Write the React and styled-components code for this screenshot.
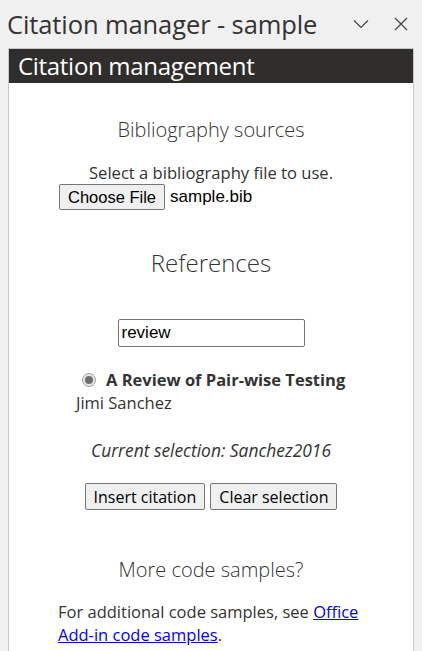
import React from "react";
import styled, { createGlobalStyle } from "styled-components";

const Global = createGlobalStyle`
  html, body { margin: 0; padding: 0; background: #f0f0f0; }
  body { font-family: "Open Sans", "Noto Sans", sans-serif; color: #333; }
  * { box-sizing: border-box; }
`;

const Pane = styled.div`
  width: 422px;
  height: 651px;
  display: flex;
  flex-direction: column;
  overflow: hidden;
  background: #f0f0f0;
`;

const TitleBar = styled.div`
  display: flex;
  align-items: center;
  height: 48px;
  padding: 0 8px 0 7px;
`;

const Title = styled.h1`
  flex: 1;
  margin: 0;
  font-weight: 400;
  font-size: 25.5px;
  color: #333;
  letter-spacing: -0.1px;
`;

const IconBtn = styled.span`
  display: flex;
  width: 26px;
  justify-content: center;
  margin-left: 14px;
  color: #444;
`;

const Panel = styled.div`
  flex: 1;
  margin: 0 8px;
  border: 1px solid #c8c8c8;
  border-bottom: none;
  background: #fff;
  display: flex;
  flex-direction: column;
`;

const PanelHeader = styled.div`
  background: #2f2e2c;
  color: #fff;
  font-size: 24px;
  font-weight: 400;
  height: 34px;
  line-height: 34px;
  padding-left: 9px;
  letter-spacing: -0.3px;
`;

const Section = styled.section`
  text-align: center;
  padding-top: ${(p) => p.$top || 0}px;
`;

const Heading = styled.h2`
  margin: 0;
  font-weight: 300;
  font-size: ${(p) => p.$size || 20}px;
  color: #333;
  line-height: 1.3;
`;

const Text = styled.p`
  margin: ${(p) => p.$mt || 0}px 0 0;
  font-size: 16.6px;
  line-height: 22px;
`;

const FilePicker = styled.div`
  display: inline-flex;
  align-items: center;
  width: 304px;
  gap: 5px;
`;

const NativeButton = styled.button`
  font-family: "Liberation Sans", Arial, sans-serif;
  font-size: 16.5px;
  color: #000;
  background: #efefef;
  border: 1px solid #767676;
  border-radius: 2px;
  padding: 0 8px;
  height: 26px;
  line-height: 20px;
`;

const FileName = styled.span`
  font-family: "Liberation Sans", Arial, sans-serif;
  font-size: 17px;
  color: #000;
`;

const SearchWrap = styled.div`
  margin-top: 41px;
  display: flex;
  justify-content: center;
`;

const SearchInput = styled.input`
  width: 187px;
  height: 28px;
  font-family: "Liberation Sans", Arial, sans-serif;
  font-size: 17px;
  color: #000;
  border: 1px solid #767676;
  border-radius: 2px;
  padding: 1px 3px;
  outline: none;
`;

const Results = styled.div`
  padding: 22px 0 0 67px;
  text-align: left;
`;

const RadioRow = styled.label`
  display: flex;
  align-items: center;
  gap: 10px;
  margin-left: 6px;
  font-weight: 700;
  font-size: 16.5px;
  line-height: 22px;
`;

const Radio = styled.span`
  width: 14px;
  height: 14px;
  border-radius: 50%;
  border: 1px solid #a0a0a0;
  background: #e6e6e6;
  display: flex;
  align-items: center;
  justify-content: center;
  &::after {
    content: "";
    width: 8px;
    height: 8px;
    border-radius: 50%;
    background: #6e6e6e;
  }
`;

const Author = styled.div`
  font-size: 16.5px;
  line-height: 22px;
  margin-top: 1px;
`;

const Current = styled.p`
  margin: 25px 0 0;
  font-style: italic;
  font-size: 17.4px;
  line-height: 22px;
  text-align: center;
`;

const ButtonRow = styled.div`
  display: flex;
  justify-content: center;
  gap: 5px;
  margin-top: 22px;
`;

const ActionButton = styled.button`
  font-family: "Open Sans", "Noto Sans", sans-serif;
  font-size: 16px;
  color: #000;
  background: #efefef;
  border: 1px solid #767676;
  border-radius: 2px;
  height: 27px;
  padding: 0 8px;
`;

const Para = styled.p`
  margin: 17px 0 0;
  padding: 0 50px 0 49px;
  font-size: 16.5px;
  line-height: 23px;
  text-align: left;
`;

const Link = styled.a`
  color: #0000ee;
  text-decoration: underline;
`;

export default function App() {
  return (
    <>
      <Global />
      <Pane>
        <TitleBar>
          <Title>Citation manager - sample</Title>
          <IconBtn>
            <svg width="16" height="10" viewBox="0 0 16 10" fill="none" stroke="#444" strokeWidth="1.2">
              <path d="M1 1.5 L8 8.5 L15 1.5" />
            </svg>
          </IconBtn>
          <IconBtn>
            <svg width="14" height="14" viewBox="0 0 14 14" fill="none" stroke="#444" strokeWidth="1.2">
              <path d="M1 1 L13 13 M13 1 L1 13" />
            </svg>
          </IconBtn>
        </TitleBar>
        <Panel>
          <PanelHeader>Citation management</PanelHeader>
          <Section $top={34}>
            <Heading $size={20}>Bibliography sources</Heading>
            <Text $mt={19}>Select a bibliography file to use.</Text>
            <FilePicker>
              <NativeButton>Choose File</NativeButton>
              <FileName>sample.bib</FileName>
            </FilePicker>
          </Section>
          <Section $top={37}>
            <Heading $size={24}>References</Heading>
            <SearchWrap>
              <SearchInput defaultValue="review" />
            </SearchWrap>
            <Results>
              <RadioRow>
                <Radio />
                A Review of Pair-wise Testing
              </RadioRow>
              <Author>Jimi Sanchez</Author>
            </Results>
            <Current>Current selection: Sanchez2016</Current>
            <ButtonRow>
              <ActionButton>Insert citation</ActionButton>
              <ActionButton>Clear selection</ActionButton>
            </ButtonRow>
          </Section>
          <Section $top={47}>
            <Heading $size={20}>More code samples?</Heading>
            <Para>
              For additional code samples, see <Link href="#">Office Add-in code samples</Link>.
            </Para>
          </Section>
        </Panel>
      </Pane>
    </>
  );
}
